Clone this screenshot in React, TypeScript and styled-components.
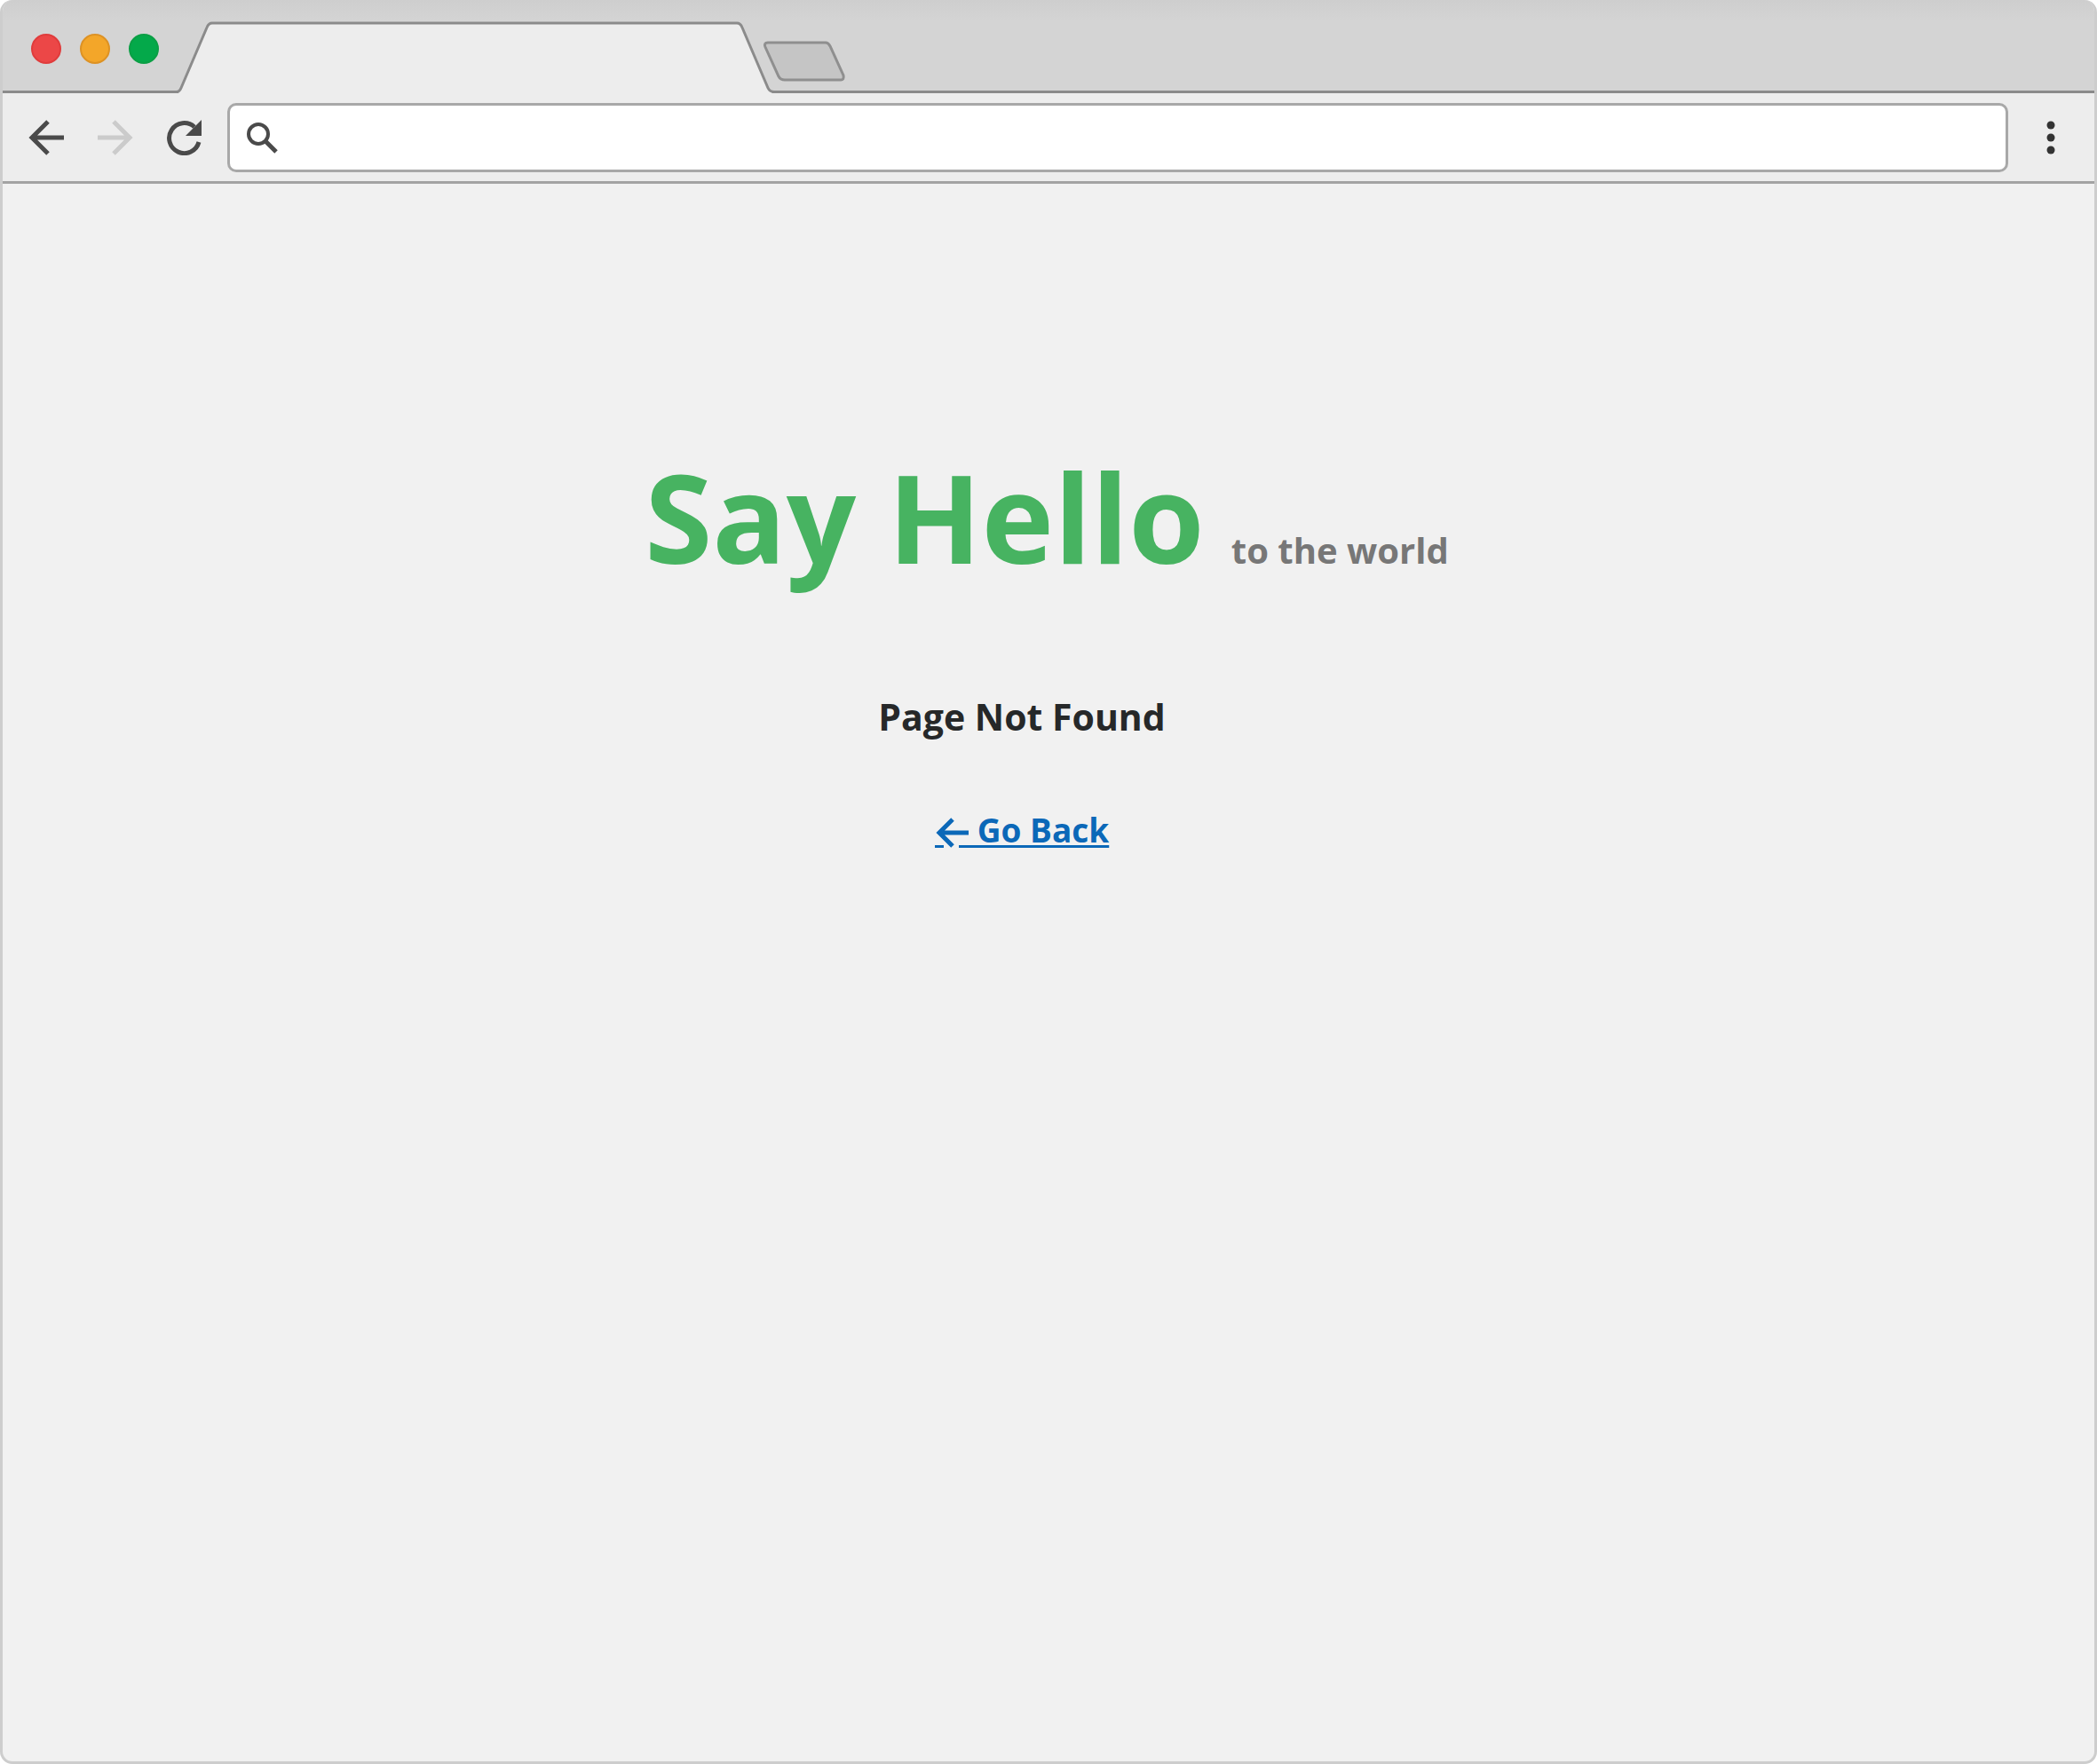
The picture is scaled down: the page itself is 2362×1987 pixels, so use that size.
import React from "react";
import styled, { createGlobalStyle } from "styled-components";

const GlobalStyle = createGlobalStyle`
  * { box-sizing: border-box; }
  html, body, #root { height: 100%; }
  body { margin: 0; background: #ffffff; }
`;

const Window = styled.div`
  display: flex;
  flex-direction: column;
  min-height: 100%;
  overflow: hidden;
  border: 3px solid #cdcdcd;
  border-top: 0;
  border-radius: 14px;
  background: #f1f1f1;
  font-family: "Open Sans", "Noto Sans", sans-serif;
`;

const TabStrip = styled.header`
  display: flex;
  align-items: flex-start;
  height: 105px;
  padding-left: 32px;
  background: linear-gradient(#cecece, #d4d4d4 24px);
  border-bottom: 3px solid #8b8b8b;
`;

const Lights = styled.div`
  display: flex;
  gap: 21px;
  padding: 38px 19px 0 0;
`;

const Light = styled.button<{ $fill: string; $edge: string }>`
  width: 34px;
  height: 34px;
  padding: 0;
  border: 2px solid ${(p) => p.$edge};
  border-radius: 50%;
  background: ${(p) => p.$fill};
`;

const TabShape = styled.svg`
  flex: none;
  display: block;
  margin-top: 24px;
`;

const NewTab = styled.button`
  display: block;
  width: 94px;
  height: 48px;
  margin: 45px 0 0 -13px;
  padding: 0;
  border: 0;
  background: none;
`;

const Toolbar = styled.nav`
  display: flex;
  align-items: center;
  gap: 18px;
  height: 102px;
  padding: 0 19px;
  background: #ededed;
  border-bottom: 3px solid #a3a3a3;
`;

const ToolButton = styled.button`
  flex: none;
  display: grid;
  place-items: center;
  width: 60px;
  height: 60px;
  padding: 0;
  border: 0;
  background: none;
  color: #4a4a4a;

  &:disabled { color: #cbcbcb; }
`;

const Address = styled.label`
  flex: 1;
  display: flex;
  align-items: center;
  gap: 12px;
  height: 78px;
  padding: 0 18px;
  background: #ffffff;
  border: 3px solid #a8a8a8;
  border-radius: 10px;
`;

const AddressInput = styled.input`
  flex: 1;
  min-width: 0;
  height: 60px;
  border: 0;
  outline: 0;
  background: none;
  font: 32px "Open Sans", sans-serif;
`;

const Page = styled.main`
  flex: 1;
  display: flex;
  flex-direction: column;
  align-items: center;
  padding: 284px 4px 0 0;
`;

const Brand = styled.div`
  display: flex;
  align-items: baseline;
  gap: 30px;
  line-height: 180px;
`;

const BrandName = styled.h1`
  margin: 0;
  font-size: 138px;
  font-weight: 700;
  color: #47b361;
`;

const Tagline = styled.span`
  font-size: 40px;
  font-weight: 700;
  color: #777777;
`;

const Message = styled.section`
  display: flex;
  flex-direction: column;
  align-items: center;
  gap: 68px;
  margin-top: 67px;
  padding-right: 56px;
`;

const MessageTitle = styled.h2`
  margin: 0;
  font-size: 41px;
  line-height: 60px;
  font-weight: 700;
  color: #262829;
`;

const BackLink = styled.a`
  font-size: 37px;
  line-height: 60px;
  font-weight: 700;
  color: #0b68b8;
  text-decoration: underline;
  text-decoration-thickness: 3px;
  text-underline-offset: 3px;
`;

const LinkArrow = styled.svg`
  vertical-align: -6px;
`;

export default function App() {
  return (
    <>
      <GlobalStyle />
      <Window>
        <TabStrip>
          <Lights>
            <Light aria-label="Close" $fill="#ec4747" $edge="#e03c3c" />
            <Light aria-label="Minimize" $fill="#f3a629" $edge="#dd9224" />
            <Light aria-label="Maximize" $fill="#04a94a" $edge="#0b9f45" />
          </Lights>
          <TabShape width="674" height="82" viewBox="0 0 674 82" aria-hidden="true">
            <path d="M0 81.500H2Q5 79 6 76L35 7Q37 2 41 2H632Q636 2 638 7L667 76Q669 80 673 81.500V82H0Z" fill="#ededed" />
            <path d="M0 79.500Q4 80 6 75L35 7Q37 2 41 2H632Q636 2 638 7L667 75Q669 79.500 674 79.500" fill="none" stroke="#8b8b8b" strokeWidth="3" />
          </TabShape>
          <NewTab aria-label="New tab">
            <svg width="94" height="48" viewBox="0 0 94 48" aria-hidden="true">
              <path d="M6 3H71Q74 3 76 7L91 40Q92 45 88 45H25Q20 45 18 41L3 8Q1 3 6 3Z" fill="#c5c5c5" stroke="#8f8f8f" strokeWidth="3" />
            </svg>
          </NewTab>
        </TabStrip>
        <Toolbar aria-label="Browser controls">
          <ToolButton aria-label="Back">
            <svg width="40" height="40" viewBox="0 0 40 40" fill="none" stroke="currentColor" strokeWidth="5" aria-hidden="true">
              <path d="M40 20H4M22 2L4 20L22 38" />
            </svg>
          </ToolButton>
          <ToolButton aria-label="Forward" disabled>
            <svg width="40" height="40" viewBox="0 0 40 40" fill="none" stroke="currentColor" strokeWidth="5" aria-hidden="true">
              <path d="M0 20H36M18 2L36 20L18 38" />
            </svg>
          </ToolButton>
          <ToolButton aria-label="Reload">
            <svg width="40" height="40" viewBox="1 0 40 40" aria-hidden="true">
              <path d="M37 25A17 17 0 1 1 32 8" fill="none" stroke="currentColor" strokeWidth="5" />
              <path d="M40 0V18H22L28 12L34 6Z" fill="currentColor" />
            </svg>
          </ToolButton>
          <Address>
            <svg width="36" height="36" viewBox="0 0 36 36" fill="none" stroke="#4a4a4a" strokeWidth="4" aria-hidden="true">
              <circle cx="14" cy="14" r="11" />
              <path d="M22 22L34 34" strokeWidth="5" />
            </svg>
            <AddressInput type="text" aria-label="Address" />
          </Address>
          <ToolButton aria-label="Menu">
            <svg width="12" height="38" viewBox="0 0 12 38" fill="#333333" aria-hidden="true">
              <circle cx="6" cy="5" r="4.500" />
              <circle cx="6" cy="19" r="4.500" />
              <circle cx="6" cy="33" r="4.500" />
            </svg>
          </ToolButton>
        </Toolbar>
        <Page>
          <Brand>
            <BrandName>Say Hello</BrandName>
            <Tagline>to the world</Tagline>
          </Brand>
          <Message>
            <MessageTitle>Page Not Found</MessageTitle>
            <BackLink href="#">
              <LinkArrow width="48" height="36" viewBox="0 0 48 36" fill="none" stroke="currentColor" aria-hidden="true">
                <path d="M38 19H5M20 4L5 19L20 34" strokeWidth="5" />
                <path d="M0 34.500H10M27 34.500H48" strokeWidth="3" />
              </LinkArrow>
              Go Back
            </BackLink>
          </Message>
        </Page>
      </Window>
    </>
  );
}
